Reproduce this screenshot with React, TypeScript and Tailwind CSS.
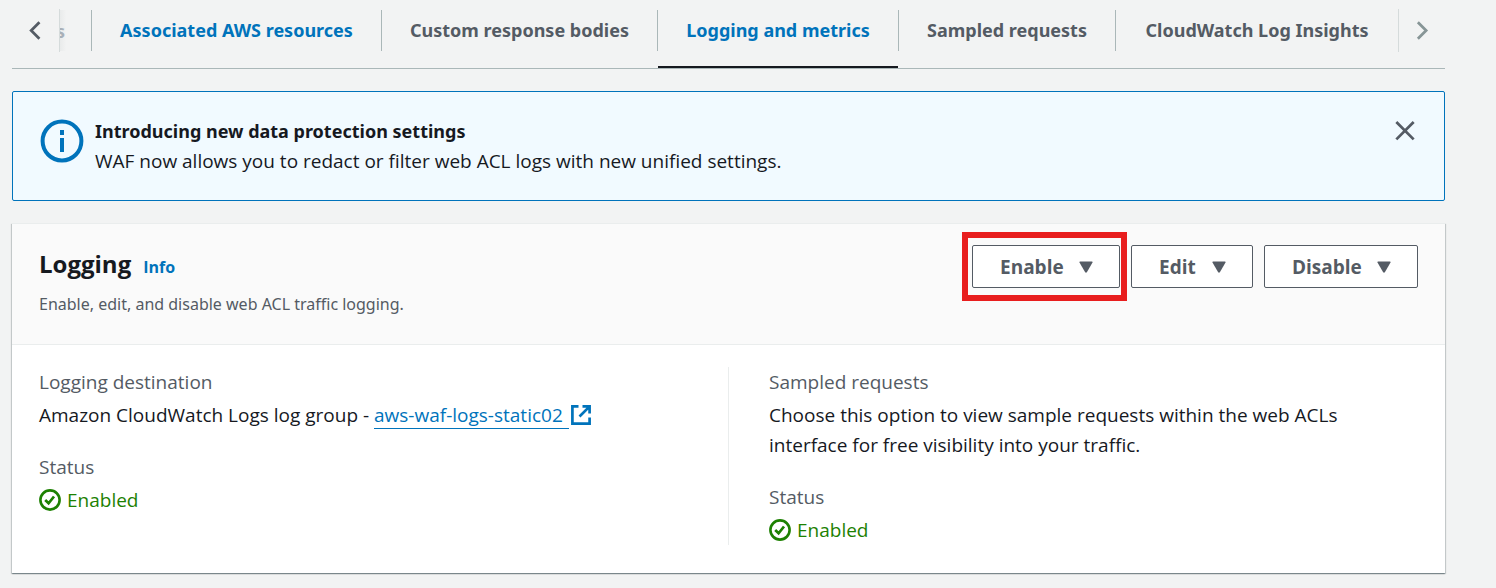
import type { ReactNode } from 'react';

const tabs = [
  { label: 'Associated AWS resources', tone: 'text-[#0073bb]', active: false },
  { label: 'Custom response bodies', tone: 'text-[#545b64]', active: false },
  { label: 'Logging and metrics', tone: 'text-[#0073bb]', active: true },
  { label: 'Sampled requests', tone: 'text-[#545b64]', active: false },
  { label: 'CloudWatch Log Insights', tone: 'text-[#545b64]', active: false },
];

function Chevron({ direction }: { direction: 'left' | 'right' }) {
  return (
    <svg width="22" height="22" viewBox="0 0 16 16" fill="none" stroke="currentColor" strokeWidth="2" aria-hidden="true">
      <path d={direction === 'left' ? 'M10.5 1.7 4.5 7.7l6 6' : 'M5 1.7l6 6-6 6'} />
    </svg>
  );
}

function Tabs() {
  return (
    <div className="flex border-b border-[#aab7b8]">
      <div className="flex w-12 shrink-0 flex-col pt-[9px]">
        <button type="button" aria-label="Scroll left" className="flex h-[43px] items-center justify-center border-r border-[#d5dbdb] text-[#545b64]">
          <Chevron direction="left" />
        </button>
      </div>
      <div role="tablist" className="grid min-w-0 flex-1 grid-cols-[32px_290fr_276fr_241fr_217fr_282fr]">
        <div className="overflow-hidden pt-[10px]">
          <div className="flex h-[41px] items-center border-r border-[#aab7b8] bg-linear-to-r from-[#e9ebeb] to-transparent to-20%">
            <span className="flex w-[5px] justify-end overflow-hidden font-['Noto_Sans',sans-serif] text-lg leading-[30px] font-bold text-[#a9b0b8]">s</span>
          </div>
        </div>
        {tabs.map((tab, i) => (
          <div key={tab.label} className="relative flex h-[68px] flex-col pt-[10px]">
            <button
              type="button"
              role="tab"
              aria-selected={tab.active}
              className={`h-[41px] pb-px font-['Noto_Sans',sans-serif] text-lg leading-[30px] font-bold whitespace-nowrap ${tab.tone} ${
                i < tabs.length - 1 ? 'border-r border-[#aab7b8]' : ''
              }`}
            >
              {tab.label}
            </button>
            {tab.active && <span className="absolute right-px bottom-0 left-0 h-[2px] bg-[#16191f]" />}
          </div>
        ))}
      </div>
      <div className="flex w-[47px] shrink-0 flex-col pt-[9px]">
        <button type="button" aria-label="Scroll right" className="flex h-[43px] items-center justify-center border-l border-[#d5dbdb] text-[#879596]">
          <Chevron direction="right" />
        </button>
      </div>
    </div>
  );
}

function Notice() {
  return (
    <section className="mt-[22px] flex gap-[11px] rounded-xs border border-[#0073bb] bg-[#f1faff] py-6 pr-7 pl-[27px]">
      <svg width="44" height="44" viewBox="0 0 44 44" className="mt-[3px] shrink-0" aria-hidden="true">
        <circle cx="22" cy="22" r="19.4" fill="none" stroke="#0073bb" strokeWidth="4" />
        <path d="M20 11h4v5h-4zM20 19h4v14h-4z" fill="#0073bb" />
      </svg>
      <div className="flex-1 text-[19px] leading-[30px] text-[#16191f]">
        <h2 className="font-['Noto_Sans',sans-serif] text-lg leading-[30px] font-bold">Introducing new data protection settings</h2>
        <p>WAF now allows you to redact or filter web ACL logs with new unified settings.</p>
      </div>
      <button type="button" aria-label="Dismiss" className="flex h-[30px] items-center text-[#545b64]">
        <svg width="22" height="22" viewBox="0 0 16 16" stroke="currentColor" strokeWidth="2" aria-hidden="true">
          <path d="M1.7 1.5l12.6 12.6M14.3 1.5 1.7 14.1" />
        </svg>
      </button>
    </section>
  );
}

function MenuButton({ label, width }: { label: string; width: string }) {
  return (
    <button
      type="button"
      aria-haspopup="menu"
      className={`flex h-[43px] items-center justify-between rounded-xs border border-[#545b64] bg-white pr-[26px] pl-[27px] text-[19px] leading-[30px] font-bold text-[#545b64] ${width}`}
    >
      {label}
      <svg width="14" height="12" viewBox="0 0 14 12" fill="currentColor" aria-hidden="true">
        <path d="M1 .5h12q1 0 .5.9L8 11q-1 1.5-2 0L.5 1.4Q0 .5 1 .5z" />
      </svg>
    </button>
  );
}

function Field({ label, children }: { label: string; children: ReactNode }) {
  return (
    <div className="flex flex-col gap-[3px]">
      <dt className="text-[#545b64]">{label}</dt>
      <dd className="text-[#16191f]">{children}</dd>
    </div>
  );
}

function Enabled() {
  return (
    <span className="flex items-center gap-[6px] text-[#1d8102]">
      <svg width="22" height="22" viewBox="0 0 22 22" fill="none" stroke="currentColor" aria-hidden="true">
        <circle cx="11" cy="11" r="9.6" strokeWidth="2.6" />
        <path d="M6.2 11l3.4 3.3 5.4-6.8" strokeWidth="2.7" />
      </svg>
      Enabled
    </span>
  );
}

function LoggingPanel() {
  return (
    <section className="mt-[22px] border-t border-[#eaeded] bg-white shadow-[0_1px_1px_0_rgba(0,28,36,0.3),1px_1px_1px_0_rgba(0,28,36,0.15),-1px_1px_1px_0_rgba(0,28,36,0.15)]">
      <header className="flex items-start justify-between border-b border-[#eaeded] bg-[#fafafa] px-[27px] pt-5 pb-7">
        <div>
          <div className="flex items-baseline gap-3">
            <h2 className="text-2xl leading-10 font-bold text-[#16191f]">Logging</h2>
            <a href="#info" className="text-base font-bold text-[#0073bb]">Info</a>
          </div>
          <p className="mt-2 font-['Noto_Sans',sans-serif] text-base leading-6 text-[#545b64]">
            Enable, edit, and disable web ACL traffic logging.
          </p>
        </div>
        <div className="flex gap-[11px] pt-px">
          <div className="relative">
            <MenuButton label="Enable" width="w-[148px]" />
            <span className="pointer-events-none absolute -top-[13px] -right-[7px] -bottom-[13px] -left-[10px] border-6 border-[#e81e1e]" />
          </div>
          <MenuButton label="Edit" width="w-[122px]" />
          <MenuButton label="Disable" width="w-[154px]" />
        </div>
      </header>
      <div className="grid grid-cols-2 pt-[22px] pr-7 pb-7 pl-[27px] text-[19px] leading-[30px]">
        <dl className="flex flex-col gap-[22px]">
          <Field label="Logging destination">
            Amazon CloudWatch Logs log group -{' '}
            <a href="#log-group" className="text-[#0073bb]">
              <span className="border-b border-[#0073bb] pr-[6px]">aws-waf-logs-static02</span>
              <svg width="22" height="22" viewBox="0 0 22 22" fill="none" stroke="currentColor" strokeWidth="2.7" className="ml-px inline-block align-[-4px]" aria-label="Opens in a new tab">
                <path d="M8.5 2.4H2.4v17.2h17.2v-6M12.5 2.4h7.1v7.1M19.4 2.6 9.5 12.5" />
              </svg>
            </a>
          </Field>
          <Field label="Status"><Enabled /></Field>
        </dl>
        <dl className="flex flex-col gap-[22px] border-l border-[#eaeded] pr-12 pl-10">
          <Field label="Sampled requests">
            Choose this option to view sample requests within the web ACLs interface for free visibility into your traffic.
          </Field>
          <Field label="Status"><Enabled /></Field>
        </dl>
      </div>
    </section>
  );
}

export default function App() {
  return (
    <main className="min-h-screen bg-[#f2f3f3] pr-[51px] pb-[14px] pl-3 font-['Open_Sans','Noto_Sans',sans-serif]">
      <Tabs />
      <Notice />
      <LoggingPanel />
    </main>
  );
}
